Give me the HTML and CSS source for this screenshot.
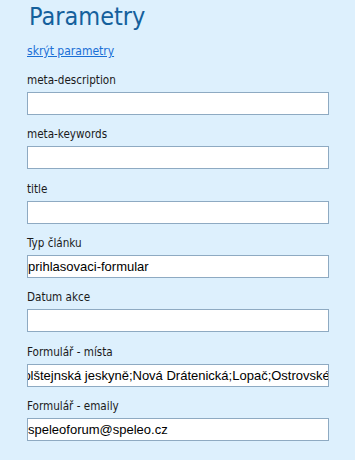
FILE: index.html
```html
<!DOCTYPE html>
<html lang="cs">
<head>
<meta charset="utf-8">
<title>Parametry</title>
<link rel="stylesheet" href="styles.css">
</head>
<body>
<div class="panel">
  <h1 class="title">Parametry</h1>
  <a class="toggle" href="#">skrýt parametry</a>
  <form class="params">
    <div class="field">
      <label class="label" for="f1">meta-description</label>
      <input class="input" id="f1" type="text" value="">
    </div>
    <div class="field">
      <label class="label" for="f2">meta-keywords</label>
      <input class="input" id="f2" type="text" value="">
    </div>
    <div class="field">
      <label class="label" for="f3">title</label>
      <input class="input" id="f3" type="text" value="">
    </div>
    <div class="field">
      <label class="label" for="f4">Typ článku</label>
      <input class="input" id="f4" type="text" value="prihlasovaci-formular">
    </div>
    <div class="field">
      <label class="label" for="f5">Datum akce</label>
      <input class="input" id="f5" type="text" value="">
    </div>
    <div class="field">
      <label class="label" for="f6">Formulář - místa</label>
      <input class="input input-scrolled" id="f6" type="text" value="Holštejnská jeskyně;Nová Drátenická;Lopač;Ostrovské vývěry">
    </div>
    <div class="field">
      <label class="label" for="f7">Formulář - emaily</label>
      <input class="input" id="f7" type="text" value="speleoforum@speleo.cz">
    </div>
  </form>
</div>
</body>
</html>
```
FILE: styles.css
```css
html, body {
  margin: 0;
  padding: 0;
  background: #ddf0fd;
}
.panel {
  padding: 2px 0 0 27px;
  font-family: "DejaVu Sans Condensed", "DejaVu Sans", Verdana, sans-serif;
  color: #1a1a1a;
}
.title {
  margin: 0;
  font-size: 25px;
  font-weight: normal;
  line-height: 30px;
  color: #14609c;
  padding-left: 2px;
}
.toggle {
  display: inline-block;
  margin-top: 12px;
  font-size: 12px;
  line-height: 15px;
  color: #1a6fd6;
}
.params {
  display: flex;
  flex-direction: column;
  gap: 11.33px;
  margin-top: 13px;
}
.field {
  display: flex;
  flex-direction: column;
  gap: 4px;
}
.label {
  font-size: 11.6px;
  line-height: 16px;
}
.input {
  box-sizing: border-box;
  width: 302px;
  height: 23px;
  margin: 0;
  padding: 0;
  border: 1px solid #8eaac2;
  background: #fff;
  font-family: "Liberation Sans", Arial, sans-serif;
  font-size: 13px;
  color: #000;
  outline: none;
}
.input-scrolled {
  text-indent: -14px;
}
```
